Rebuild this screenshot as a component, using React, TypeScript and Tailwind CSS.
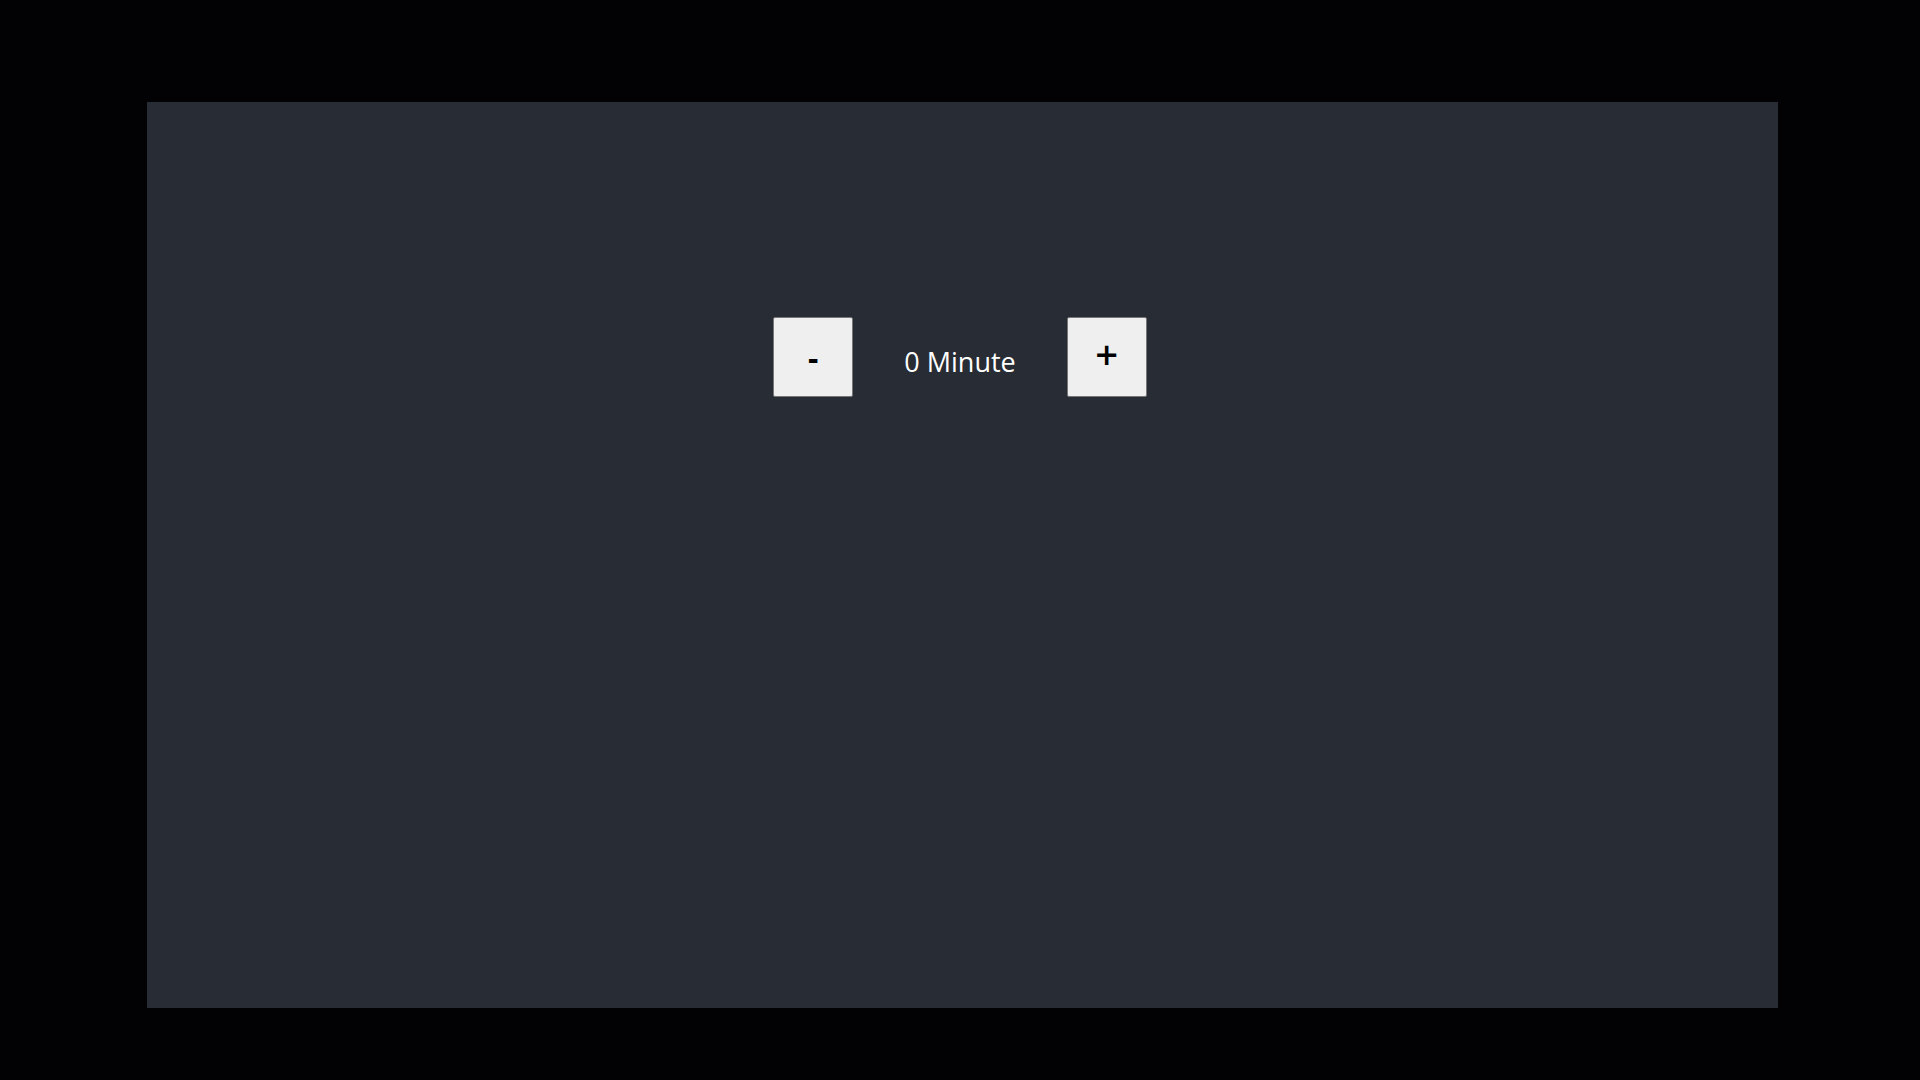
export default function App() {
  return (
    <div className="w-[1920px] h-[1080px] bg-[#020204] pt-[102px] pl-[147px]" style={{ fontFamily: '"Open Sans", "Noto Sans", sans-serif' }}>
      <div className="w-[1631px] h-[906px] bg-[#282c34] pt-[215px] pr-[5px] flex justify-center items-start">
        <div className="flex items-center">
          <button className="w-[80px] h-[80px] bg-[#efefef] border border-[#767676] rounded-[2px] text-black text-[32px] font-bold flex items-center justify-center pt-[2px]">-</button>
          <span className="mx-[51px] text-white text-[27px] mt-[8px] leading-none">0 Minute</span>
          <button className="w-[80px] h-[80px] bg-[#efefef] border border-[#767676] rounded-[2px] text-black text-[40px] font-semibold flex items-center justify-center pb-[6px]">+</button>
        </div>
      </div>
    </div>
  );
}
